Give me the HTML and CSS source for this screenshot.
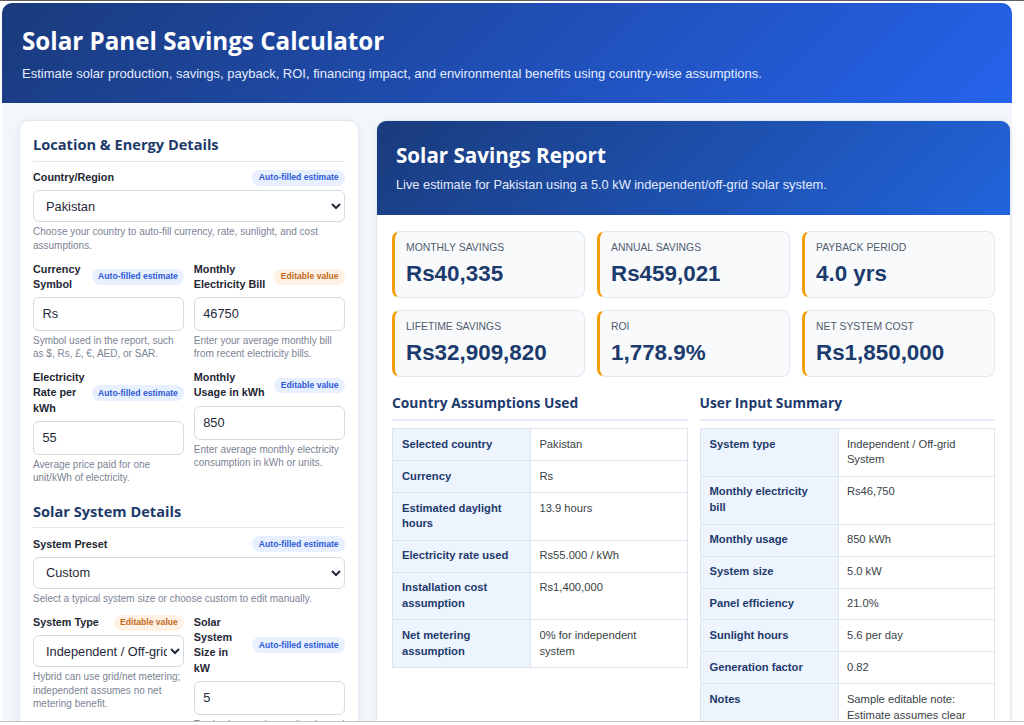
FILE: index.html
```html
<!DOCTYPE html>
<html lang="en">
<head>
  <meta charset="UTF-8">
  <meta name="viewport" content="width=device-width, initial-scale=1.0">
  <title>Solar Panel Savings Calculator</title>
  <link rel="stylesheet" href="styles.css">
</head>
<body>

<div class="app">
  <header class="app-header">
    <h1>Solar Panel Savings Calculator</h1>
    <p>Estimate solar production, savings, payback, ROI, financing impact, and environmental benefits using country-wise assumptions.</p>
  </header>

  <main class="layout">
    <!-- Inputs -->
    <section class="panel form-panel">
      <h2 class="panel-title">Location &amp; Energy Details</h2>
      <div class="fields">
        <div class="field">
          <div class="field-head">
            <label for="country">Country/Region</label>
            <span class="tag tag-blue">Auto-filled estimate</span>
          </div>
          <select id="country">
            <option>Pakistan</option>
            <option>India</option>
            <option>United States</option>
            <option>United Kingdom</option>
            <option>United Arab Emirates</option>
            <option>Saudi Arabia</option>
          </select>
          <p class="hint">Choose your country to auto-fill currency, rate, sunlight, and cost assumptions.</p>
        </div>

        <div class="field-grid">
          <div class="field">
            <div class="field-head">
              <label for="currency">Currency Symbol</label>
              <span class="tag tag-blue">Auto-filled estimate</span>
            </div>
            <input type="text" id="currency" value="Rs">
            <p class="hint">Symbol used in the report, such as $, Rs, £, €, AED, or SAR.</p>
          </div>
          <div class="field">
            <div class="field-head">
              <label for="bill">Monthly Electricity Bill</label>
              <span class="tag tag-orange">Editable value</span>
            </div>
            <input type="text" id="bill" value="46750">
            <p class="hint">Enter your average monthly bill from recent electricity bills.</p>
          </div>
          <div class="field">
            <div class="field-head">
              <label for="rate">Electricity Rate per kWh</label>
              <span class="tag tag-blue">Auto-filled estimate</span>
            </div>
            <input type="text" id="rate" value="55">
            <p class="hint">Average price paid for one unit/kWh of electricity.</p>
          </div>
          <div class="field">
            <div class="field-head">
              <label for="usage">Monthly Usage in kWh</label>
              <span class="tag tag-blue">Editable value</span>
            </div>
            <input type="text" id="usage" value="850">
            <p class="hint">Enter average monthly electricity consumption in kWh or units.</p>
          </div>
        </div>
      </div>

      <h2 class="panel-title section-gap">Solar System Details</h2>
      <div class="fields">
        <div class="field">
          <div class="field-head">
            <label for="preset">System Preset</label>
            <span class="tag tag-blue">Auto-filled estimate</span>
          </div>
          <select id="preset">
            <option>Custom</option>
            <option>3 kW starter</option>
            <option>5 kW home</option>
            <option>10 kW large home</option>
          </select>
          <p class="hint">Select a typical system size or choose custom to edit manually.</p>
        </div>

        <div class="field-grid">
          <div class="field">
            <div class="field-head">
              <label for="type">System Type</label>
              <span class="tag tag-orange">Editable value</span>
            </div>
            <select id="type">
              <option>Independent / Off-grid System</option>
              <option>Hybrid System</option>
              <option>On-grid System</option>
            </select>
            <p class="hint">Hybrid can use grid/net metering; independent assumes no net metering benefit.</p>
          </div>
          <div class="field">
            <div class="field-head">
              <label for="size">Solar System Size in kW</label>
              <span class="tag tag-blue">Auto-filled estimate</span>
            </div>
            <input type="text" id="size" value="5">
            <p class="hint">Total solar panel capacity planned for installation.</p>
          </div>
          <div class="field">
            <div class="field-head">
              <label for="efficiency">Panel Efficiency %</label>
              <span class="tag tag-orange">Editable value</span>
            </div>
            <input type="text" id="efficiency" value="21">
            <p class="hint">Typical modern panels range from 18% to 23%.</p>
          </div>
          <div class="field">
            <div class="field-head">
              <label for="sun">Sunlight Hours</label>
              <span class="tag tag-blue">Auto-filled estimate</span>
            </div>
            <input type="text" id="sun" value="5.6">
            <p class="hint">Average peak sun hours per day.</p>
          </div>
        </div>
      </div>
    </section>

    <!-- Report -->
    <section class="panel report">
      <div class="report-head">
        <h2>Solar Savings Report</h2>
        <p>Live estimate for Pakistan using a 5.0 kW independent/off-grid solar system.</p>
      </div>

      <div class="report-body">
        <div class="metrics">
          <div class="metric">
            <div class="metric-label">Monthly Savings</div>
            <div class="metric-value">Rs40,335</div>
          </div>
          <div class="metric">
            <div class="metric-label">Annual Savings</div>
            <div class="metric-value">Rs459,021</div>
          </div>
          <div class="metric">
            <div class="metric-label">Payback Period</div>
            <div class="metric-value">4.0 yrs</div>
          </div>
          <div class="metric">
            <div class="metric-label">Lifetime Savings</div>
            <div class="metric-value">Rs32,909,820</div>
          </div>
          <div class="metric">
            <div class="metric-label">ROI</div>
            <div class="metric-value">1,778.9%</div>
          </div>
          <div class="metric">
            <div class="metric-label">Net System Cost</div>
            <div class="metric-value">Rs1,850,000</div>
          </div>
        </div>

        <div class="summary">
          <div>
            <h3>Country Assumptions Used</h3>
            <table class="info-table">
              <tr><th>Selected country</th><td>Pakistan</td></tr>
              <tr><th>Currency</th><td>Rs</td></tr>
              <tr><th>Estimated daylight hours</th><td>13.9 hours</td></tr>
              <tr><th>Electricity rate used</th><td>Rs55.000 / kWh</td></tr>
              <tr><th>Installation cost assumption</th><td>Rs1,400,000</td></tr>
              <tr><th>Net metering assumption</th><td>0% for independent system</td></tr>
            </table>
          </div>
          <div>
            <h3>User Input Summary</h3>
            <table class="info-table">
              <tr><th>System type</th><td>Independent / Off-grid System</td></tr>
              <tr><th>Monthly electricity bill</th><td>Rs46,750</td></tr>
              <tr><th>Monthly usage</th><td>850 kWh</td></tr>
              <tr><th>System size</th><td>5.0 kW</td></tr>
              <tr><th>Panel efficiency</th><td>21.0%</td></tr>
              <tr><th>Sunlight hours</th><td>5.6 per day</td></tr>
              <tr><th>Generation factor</th><td>0.82</td></tr>
              <tr><th>Notes</th><td>Sample editable note: Estimate assumes clear weather and regular panel cleaning.</td></tr>
            </table>
          </div>
        </div>
      </div>
    </section>
  </main>
</div>

</body>
</html>
```

FILE: styles.css
```css
/* Base */
* {
  box-sizing: border-box;
}

body {
  margin: 0;
  background: #fff;
  border-top: 1px solid #5f5f5f;
  font-family: "Liberation Sans", Arial, sans-serif;
  color: #1f2937;
}

/* thin window edge along the bottom */
body::after {
  content: "";
  position: fixed;
  left: 0;
  right: 0;
  bottom: 0;
  height: 3px;
  background: #fff;
  border-top: 1px solid #c2c2c2;
}

h1, h2, h3 {
  font-family: "Open Sans", "Liberation Sans", sans-serif;
  font-weight: 700;
}

.app {
  width: 1010px;
  margin: 2px 0 0 2px;
  background: #f3f6fb;
  border-radius: 10px 10px 0 0;
}

/* Header */
.app-header {
  background: linear-gradient(135deg, #1a3a7c 0%, #2563eb 100%);
  color: #fff;
  padding: 22.5px 20px 20.4px;
  border-radius: 10px 10px 0 0;
}

.app-header h1 {
  margin: 0;
  font-size: 24.2px;
  line-height: 29px;
}

.app-header p {
  margin: 10.8px 0 0;
  font-size: 13px;
  line-height: 17.3px;
  color: #e4ecff;
}

/* Two column layout */
.layout {
  display: grid;
  grid-template-columns: 340px 1fr;
  gap: 17px;
  padding: 17px 1px 17px 17px;
  align-items: start;
}

.panel {
  background: #fff;
  border: 1px solid #e2e8f0;
  border-radius: 10px;
  box-shadow: 0 2px 10px rgba(20, 40, 90, 0.06);
}

/* Form panel */
.form-panel {
  padding: 13.4px 13px;
}

.panel-title {
  margin: 0 0 8px;
  font-size: 14.6px;
  line-height: 20px;
  color: #1d3a6b;
  padding-bottom: 6.4px;
  border-bottom: 1px solid #e3e8f0;
}

.section-gap {
  margin-top: 16.5px;
}

.fields {
  display: flex;
  flex-direction: column;
  gap: 9.6px;
}

.field-grid {
  display: grid;
  grid-template-columns: 1fr 1fr;
  gap: 9.6px;
  align-items: start;
}

.field-head {
  display: flex;
  align-items: center;
  justify-content: space-between;
  gap: 6.4px;
  margin-bottom: 4.8px;
}

.field-head label {
  font-size: 10.8px;
  font-weight: 700;
  line-height: 15.3px;
  color: #1f2633;
}

.tag {
  flex-shrink: 0;
  white-space: nowrap;
  font-size: 8.6px;
  font-weight: 700;
  line-height: 11px;
  padding: 2.4px 6.4px;
  border-radius: 999px;
}

.tag-blue {
  background: #e8efff;
  color: #2d5bd7;
}

.tag-orange {
  background: #fff1e3;
  color: #c2691d;
}

select,
input {
  display: block;
  width: 100%;
  font-family: "Liberation Sans", Arial, sans-serif;
  font-size: 12.8px;
  color: #1f2937;
  background: #fff;
  border: 1px solid #d4dbe6;
  border-radius: 6px;
}

select {
  height: 32px;
  padding: 0 0 0 8px;
}

input {
  height: 34px;
  padding: 0 8.4px;
}

.hint {
  margin: 3px 0 0;
  font-size: 10px;
  line-height: 13.3px;
  color: #7b8494;
}

/* Report panel */
.report {
  overflow: hidden;
}

.report-head {
  background: linear-gradient(135deg, #1a3b7c 0%, #2164dc 100%);
  color: #fff;
  padding: 21px 19px 22px;
}

.report-head h2 {
  margin: 0;
  font-size: 20.6px;
  line-height: 26px;
}

.report-head p {
  margin: 8.5px 0 0;
  font-size: 12.8px;
  line-height: 17px;
  color: #e4ecff;
}

.report-body {
  padding: 16px 15px 20px;
}

.metrics {
  display: grid;
  grid-template-columns: repeat(3, 1fr);
  gap: 12px;
}

.metric {
  background: #f8fafc;
  border: 1px solid #e2e8f0;
  border-left: 3px solid #f59e0b;
  border-radius: 8px;
  padding: 9px 11px 10px;
}

.metric-label {
  font-size: 10.4px;
  line-height: 14px;
  text-transform: uppercase;
  color: #525d6e;
}

.metric-value {
  margin-top: 4.8px;
  font-size: 22.4px;
  font-weight: 700;
  line-height: 27px;
  color: #1c3a6c;
}

.summary {
  display: grid;
  grid-template-columns: 1fr 1fr;
  gap: 12px;
  margin-top: 15.5px;
  align-items: start;
}

.summary h3 {
  margin: 0 0 7px;
  font-size: 13.8px;
  line-height: 20px;
  color: #1c3a6c;
  padding-bottom: 6.4px;
  border-bottom: 2px solid #e6ecf5;
}

.info-table {
  width: 100%;
  border-collapse: collapse;
  table-layout: fixed;
  font-size: 11.2px;
  line-height: 15.8px;
}

.info-table th,
.info-table td {
  border: 1px solid #dde5ef;
  text-align: left;
  vertical-align: top;
}

.info-table th {
  width: 47%;
  padding: 7.6px 14px 7.6px 9px;
  background: #eef4fe;
  color: #1c3a6c;
  font-weight: 700;
}

.info-table td {
  padding: 7.6px 14px 7.6px 8px;
  color: #3a3f47;
}
```
